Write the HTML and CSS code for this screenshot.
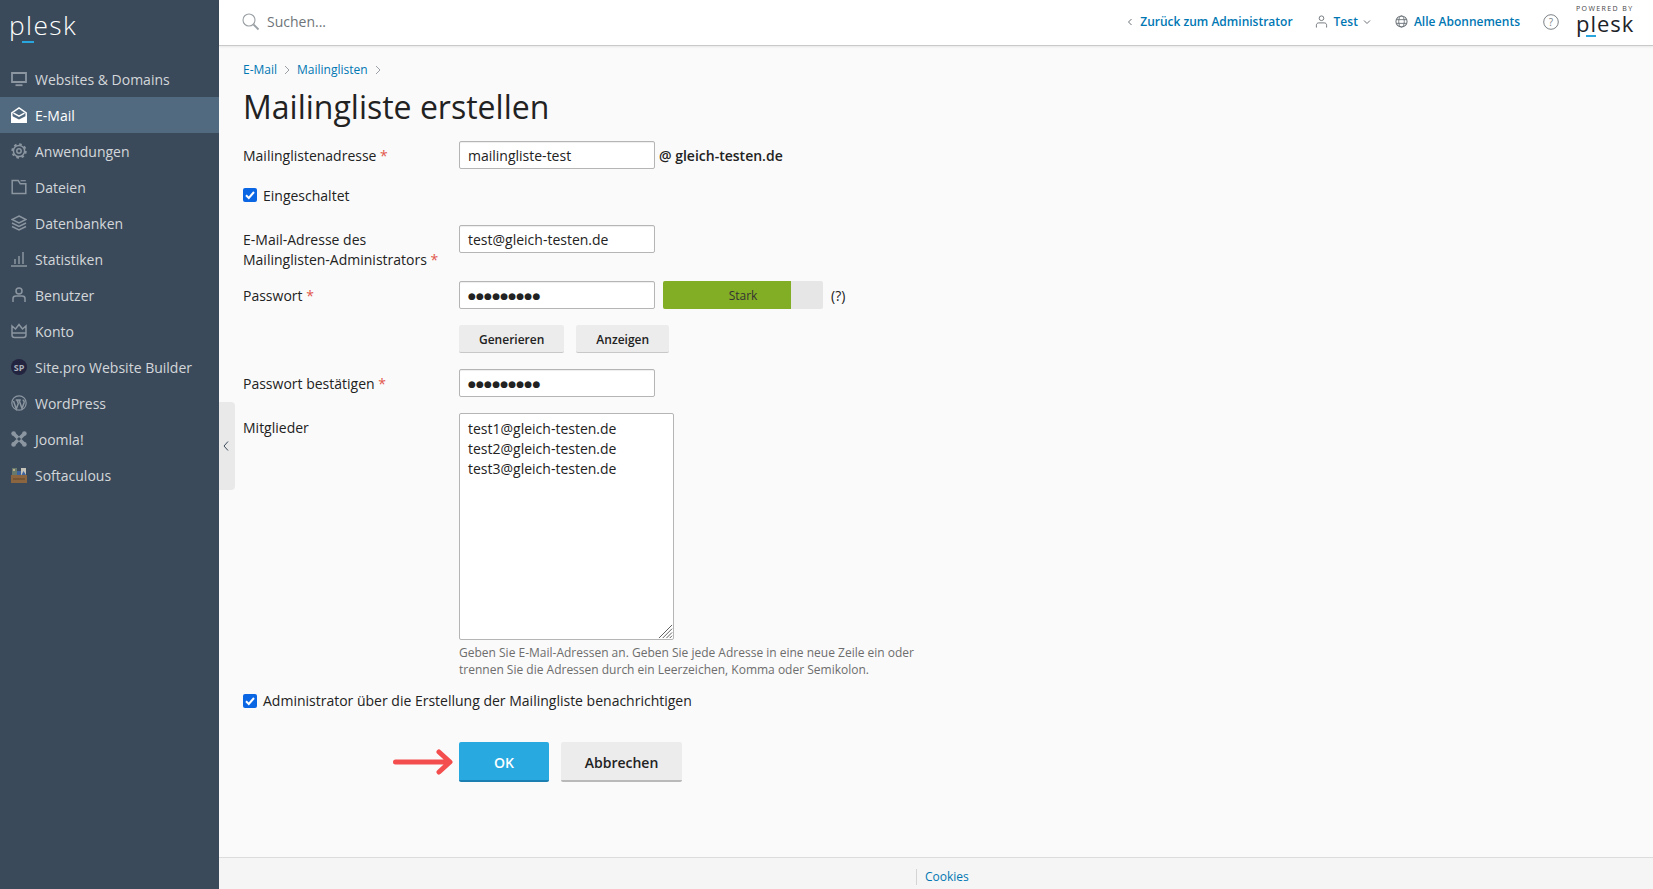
FILE: index.html
```html
<!DOCTYPE html>
<html lang="de">
<head>
<meta charset="utf-8">
<title>Mailingliste erstellen</title>
<link rel="stylesheet" href="styles.css">
</head>
<body>
<div class="app">
  <aside class="sidebar">
    <div class="logo"><span class="logo-word">plesk</span><span class="logo-bar"></span></div>
    <nav class="nav">
      <a class="nav-item"><svg class="nav-icon" viewBox="0 0 16 16"><path d="M1 2h14v9H1z" fill="none" stroke="currentColor" stroke-width="1.8"/><path d="M4.500 14.200h7" stroke="currentColor" stroke-width="1.800"/></svg>Websites &amp; Domains</a>
      <a class="nav-item active"><svg class="nav-icon" viewBox="0 0 16 16"><path d="M.8 15.500V5.800L8 1l7.200 4.800v9.700Z" fill="none" stroke="currentColor" stroke-width="1.500"/><path d="M.5 8.800 8 12.500l7.500-3.700V16H.5Z" fill="currentColor"/><path d="M2.500 6.200 8 9.200l5.500-3" fill="none" stroke="currentColor" stroke-width="1.400"/></svg>E-Mail</a>
      <a class="nav-item"><svg class="nav-icon" viewBox="0 0 16 16"><circle cx="8" cy="8" r="2.200" fill="none" stroke="currentColor" stroke-width="1.500"/><circle cx="8" cy="8" r="5.600" fill="none" stroke="currentColor" stroke-width="1.500"/><circle cx="8" cy="8" r="6.800" fill="none" stroke="currentColor" stroke-width="1.800" stroke-dasharray="2.600 2.740"/></svg>Anwendungen</a>
      <a class="nav-item"><svg class="nav-icon" viewBox="0 0 16 16"><path d="M1.200 1.500v13h13.600V4.800H9.300L7.200 1.500Z" fill="none" stroke="currentColor" stroke-width="1.500"/><path d="M9.500 1.700h5.300" stroke="currentColor" stroke-width="1.200"/></svg>Dateien</a>
      <a class="nav-item"><svg class="nav-icon" viewBox="0 0 16 16"><path d="M8 1 15 4.500 8 8 1 4.500Z" fill="none" stroke="currentColor" stroke-width="1.400"/><path d="M1 8l7 3.500L15 8M1 11.500 8 15l7-3.500" fill="none" stroke="currentColor" stroke-width="1.400"/></svg>Datenbanken</a>
      <a class="nav-item"><svg class="nav-icon" viewBox="0 0 16 16"><path d="M0 15h16M4 13V8M8 13V5M12 13V1" fill="none" stroke="currentColor" stroke-width="1.500"/></svg>Statistiken</a>
      <a class="nav-item"><svg class="nav-icon" viewBox="0 0 16 16"><circle cx="8" cy="4" r="3" fill="none" stroke="currentColor" stroke-width="1.500"/><path d="M2 15v-3.500C2 10 3.500 9 5 9h6c1.500 0 3 1 3 2.500V15" fill="none" stroke="currentColor" stroke-width="1.500"/></svg>Benutzer</a>
      <a class="nav-item"><svg class="nav-icon" viewBox="0 0 16 16"><path d="M1 3l3.500 3L8 1.500 11.500 6 15 3v9c0 1.500-1 2.500-2.500 2.500h-9C2 14.500 1 13.500 1 12Z" fill="none" stroke="currentColor" stroke-width="1.500"/><path d="M1 10h14" stroke="currentColor" stroke-width="1.500"/></svg>Konto</a>
      <a class="nav-item"><span class="nav-icon sp-badge">SP</span>Site.pro Website Builder</a>
      <a class="nav-item"><svg class="nav-icon" viewBox="0 0 16 16"><circle cx="8" cy="8" r="7.200" fill="none" stroke="currentColor" stroke-width="1.200"/><path d="M2.500 6 5.300 14 7.300 8.500 6 5H4.700M6 5h3.800M8 5 11 13.500 13 8c.4-1.400-.3-2.700-1.300-3" fill="none" stroke="currentColor" stroke-width="1.500"/></svg>WordPress</a>
      <a class="nav-item"><svg class="nav-icon" viewBox="0 0 16 16"><path d="M3 3l10 10M13 3 3 13" stroke="currentColor" stroke-width="3.600"/><circle cx="2.600" cy="2.600" r="2.300" fill="currentColor"/><circle cx="13.400" cy="2.600" r="2.300" fill="currentColor"/><circle cx="2.600" cy="13.400" r="2.300" fill="currentColor"/><circle cx="13.400" cy="13.400" r="2.300" fill="currentColor"/><path d="M8 6 10 8 8 10 6 8Z" fill="#3b4a5a"/></svg>Joomla!</a>
      <a class="nav-item"><svg class="nav-icon soft" viewBox="0 0 16 16"><path d="M0 8h16v8H0z" fill="#94683e"/><path d="M1 1h5v7H1z" fill="#6c7f70"/><path d="M2 2h2v2H2z" fill="#c9b98d"/><path d="M6 4h4v4H6z" fill="#3f66a5"/><path d="M10 1h5v7h-5z" fill="#d6d2c5"/><path d="M10.500 8l2-4 2.500 4z" fill="#3f66a5"/><path d="M2 11h12v2H2z" fill="#7d5732"/></svg>Softaculous</a>
    </nav>
  </aside>
  <div class="sidebar-toggle"><svg class="toggle-icon" viewBox="0 0 8 12"><path d="M6 1.500 2 6l4 4.500" fill="none" stroke="#3b4a5a" stroke-width="1"/></svg></div>
  <div class="column">
    <header class="topbar">
      <div class="search">
        <svg class="search-icon" viewBox="0 0 18 18"><circle cx="7" cy="7" r="6" fill="none" stroke="#9aa0a5" stroke-width="1.100"/><path d="M11.500 11.500l5 5" stroke="#9aa0a5" stroke-width="1.800"/></svg>
        <span class="search-text">Suchen...</span>
      </div>
      <div class="top-links">
        <a class="top-link back"><svg class="mini" viewBox="0 0 6 8"><path d="M4.500 1 1.500 4l3 3" fill="none" stroke="#6b7278" stroke-width="1"/></svg>Zurück zum Administrator</a>
        <a class="top-link user"><svg class="top-icon" viewBox="0 0 14 14"><circle cx="7" cy="3.500" r="2.500" fill="none" stroke="#6b7278"/><path d="M1.500 13.500v-2.500c0-1.500 1-2.500 2.500-2.500h6c1.500 0 2.500 1 2.500 2.500v2.500" fill="none" stroke="#6b7278"/></svg>Test<svg class="mini caret" viewBox="0 0 8 6"><path d="M1 1.500 4 4.500l3-3" fill="none" stroke="#6b7278" stroke-width="1"/></svg></a>
        <a class="top-link subs"><svg class="top-icon" viewBox="0 0 14 14"><circle cx="7" cy="7" r="6" fill="none" stroke="#6b7278" stroke-width="1.100"/><ellipse cx="7" cy="7" rx="3" ry="6" fill="none" stroke="#6b7278"/><path d="M1.500 5h11M1.500 9h11" stroke="#6b7278"/></svg>Alle Abonnements</a>
        <span class="help"><svg class="help-icon" viewBox="0 0 16 16"><circle cx="8" cy="8" r="7.300" fill="none" stroke="#7b8186" stroke-width="1"/><text x="8" y="11.500" text-anchor="middle" class="help-q">?</text></svg></span>
        <div class="powered">
          <span class="powered-by">POWERED BY</span>
          <span class="powered-word">plesk</span><span class="powered-bar"></span>
        </div>
      </div>
    </header>
    <main class="main">
      <div class="crumbs"><a>E-Mail</a><svg class="crumb-sep" viewBox="0 0 6 10"><path d="M1 1l4 4-4 4" fill="none" stroke="#9aa0a5"/></svg><a>Mailinglisten</a><svg class="crumb-sep" viewBox="0 0 6 10"><path d="M1 1l4 4-4 4" fill="none" stroke="#9aa0a5"/></svg></div>
      <h1 class="title">Mailingliste erstellen</h1>
      <form class="form">
        <div class="row r-addr">
          <label class="label">Mailinglistenadresse <b class="req">*</b></label>
          <div class="field inline"><div class="input">mailingliste-test</div><span class="domain">@ gleich-testen.de</span></div>
        </div>
        <label class="check c-on"><span class="box"><svg viewBox="0 0 14 14"><path d="M3 7.300 5.800 10 11 4" fill="none" stroke="#fff" stroke-width="2"/></svg></span><span class="check-low">Eingeschaltet</span></label>
        <div class="row r-admin">
          <label class="label">E-Mail-Adresse des<br>Mailinglisten-Administrators <b class="req">*</b></label>
          <div class="field"><div class="input">test@gleich-testen.de</div></div>
        </div>
        <div class="row r-pass">
          <label class="label">Passwort <b class="req">*</b></label>
          <div class="field inline">
            <div class="input dots">●●●●●●●●●</div>
            <div class="meter"><div class="meter-fill">Stark</div></div>
            <span class="meter-help">(?)</span>
          </div>
        </div>
        <div class="row r-btns">
          <span class="label"></span>
          <div class="field inline gap12"><span class="btn">Generieren</span><span class="btn">Anzeigen</span></div>
        </div>
        <div class="row r-confirm">
          <label class="label">Passwort bestätigen <b class="req">*</b></label>
          <div class="field"><div class="input dots">●●●●●●●●●</div></div>
        </div>
        <div class="row r-members">
          <label class="label">Mitglieder</label>
          <div class="field">
            <div class="textarea">test1@gleich-testen.de<br>test2@gleich-testen.de<br>test3@gleich-testen.de
              <svg class="grip" viewBox="0 0 16 16"><path d="M15 1 1 15M15 5 5 15M15 9 9 15M15 12.500 12.500 15" stroke="#555" stroke-width="1" fill="none"/></svg>
            </div>
            <p class="hint">Geben Sie E-Mail-Adressen an. Geben Sie jede Adresse in eine neue Zeile ein oder<br>trennen Sie die Adressen durch ein Leerzeichen, Komma oder Semikolon.</p>
          </div>
        </div>
        <label class="check c-notify"><span class="box"><svg viewBox="0 0 14 14"><path d="M3 7.300 5.800 10 11 4" fill="none" stroke="#fff" stroke-width="2"/></svg></span>Administrator über die Erstellung der Mailingliste benachrichtigen</label>
        <div class="row r-actions">
          <span class="label arrow-cell"><svg class="arrow" viewBox="0 0 60 26"><path d="M2.500 13H56M46 3l11 10-11 10" fill="none" stroke="#f44d4d" stroke-width="5" stroke-linecap="round" stroke-linejoin="round"/></svg></span>
          <div class="field inline gap12"><span class="action ok">OK</span><span class="action cancel">Abbrechen</span></div>
        </div>
      </form>
    </main>
    <footer class="footer"><a class="cookies">Cookies</a></footer>
  </div>
</div>
</body>
</html>
```

FILE: styles.css
```css
* { box-sizing: border-box; }
html, body { margin: 0; height: 100%; }
body { font-family: "Open Sans", "Liberation Sans", sans-serif; font-size: 14px; color: #222; background: #fafafa; overflow: hidden; }
.app { display: flex; height: 889px; position: relative; }
a { color: #0077b3; text-decoration: none; }

.sidebar { width: 219px; flex: none; background: #3b4a5a; color: #d5d9dd; }
.logo { height: 61px; padding: 10px 0 0 9px; position: relative; }
.logo-word { display: block; font-weight: 300; font-size: 26.3px; line-height: 30px; color: #fff; letter-spacing: 1.4px; }
.logo-bar { position: absolute; left: 22px; top: 41px; width: 12px; height: 2px; background: #2aa6df; }
.nav { display: flex; flex-direction: column; }
.nav-item { height: 36px; display: flex; align-items: center; padding-left: 11px; color: #d3d7db; font-size: 14px; gap: 8px; }
.nav-item.active { background: #526a7f; color: #fff; }
.nav-icon { width: 16px; height: 16px; flex: none; color: #8b96a1; }
.active .nav-icon { color: #fff; }
.sp-badge { border-radius: 50%; background: #23243f; color: #aab0bb; font-size: 9px; font-weight: 700; display: flex; align-items: center; justify-content: center; }
.soft { opacity: .9; }

.sidebar-toggle { position: absolute; left: 219px; top: 402px; width: 16px; height: 88px; padding-right: 2px; background: #e9e9e9; border-radius: 0 4px 4px 0; display: flex; align-items: center; justify-content: center; z-index: 2; }
.toggle-icon { width: 8px; height: 12px; }

.column { flex: 1; min-width: 0; display: flex; flex-direction: column; }
.topbar { height: 46px; flex: none; background: #fff; border-bottom: 1px solid #c9c9c9; box-shadow: 0 1px 2px rgba(0,0,0,.08); display: flex; align-items: center; justify-content: space-between; padding: 0 19px 2px 23px; }
.search { display: flex; align-items: center; gap: 7px; }
.search-icon { width: 18px; height: 18px; }
.search-text { font-size: 14px; color: #6e7478; }
.top-links { display: flex; align-items: center; }
.top-link { display: flex; align-items: center; font-size: 12px; font-weight: 600; color: #0077b3; }
.mini { width: 6px; height: 8px; margin-right: 7px; }
.caret { width: 8px; height: 6px; margin: 0 0 0 5px; }
.top-icon { width: 13px; height: 13px; margin-right: 6px; }
.back { margin-right: 22px; }
.user { margin-right: 24px; }
.subs { margin-right: 23px; }
.help { display: flex; margin-right: 17px; }
.help-icon { width: 16px; height: 16px; }
.help-q { font-size: 10px; fill: #7b8186; font-family: "Open Sans", sans-serif; }
.powered { position: relative; width: 58px; height: 34px; color: #222; }
.powered-by { display: block; font-size: 7px; letter-spacing: 1.4px; line-height: 8px; color: #444; white-space: nowrap; }
.powered-word { display: block; font-weight: 400; font-size: 22px; line-height: 20px; letter-spacing: 1px; color: #1c2329; }
.powered-bar { position: absolute; left: 10px; top: 30px; width: 10px; height: 2px; background: #2aa6df; }

.main { flex: 1; padding: 16px 24px 0; min-height: 0; }
.crumbs { display: flex; align-items: center; font-size: 12px; line-height: 16px; margin-top: 0; }
.crumb-sep { width: 6px; height: 10px; margin: 0 7px; }
.title { font-size: 32px; font-weight: 400; line-height: 44px; margin: 7px 0 0; color: #222; }
.form { display: flex; flex-direction: column; }
.row { display: flex; }
.label { width: 216px; flex: none; line-height: 20px; padding-top: 5px; }
.req { color: #e2574c; font-weight: 400; }
.field { flex: 1; }
.inline { display: flex; align-items: center; }
.gap12 { gap: 12px; }
.input { width: 196px; height: 28px; background: #fff; border: 1px solid #b5b5b5; border-radius: 2px; padding: 0 8px; line-height: 28px; font-size: 14px; box-shadow: inset 0 1px 1px #eee; flex: none; }
.dots { font-size: 9px; letter-spacing: .2px; color: #222; font-family: "DejaVu Sans", sans-serif; }
.domain { font-weight: 600; margin-left: 4px; line-height: 22px; padding-top: 2px; }
.check { display: flex; align-items: center; gap: 6px; line-height: 20px; }
.check-low { padding-top: 2px; }
.box { width: 14px; height: 14px; background: #0b66e4; border-radius: 2px; display: block; flex: none; }
.box svg { display: block; width: 14px; height: 14px; }
.r-addr { margin-top: 12px; }
.c-on { margin-top: 15px; }
.r-admin { margin-top: 19px; }
.r-pass { margin-top: 11px; }
.r-btns { margin-top: 16px; }
.r-confirm { margin-top: 16px; }
.r-members { margin-top: 16px; }
.meter { width: 160px; height: 28px; background: #e6e6e6; border-radius: 2px; margin-left: 8px; overflow: hidden; flex: none; }
.meter-fill { width: 128px; height: 28px; background: #82ae25; font-size: 12px; line-height: 30px; text-align: center; color: #333; padding-left: 32px; }
.meter-help { margin-left: 8px; font-size: 14px; }
.btn { height: 28px; line-height: 30px; padding: 0 20px; background: #ececec; border-bottom: 1px solid #c8c8c8; border-radius: 2px; font-size: 12px; font-weight: 600; color: #222; }
.textarea { width: 215px; height: 227px; background: #fff; border: 1px solid #b5b5b5; border-radius: 2px; padding: 5px 8px; line-height: 20px; position: relative; }
.grip { position: absolute; right: 0; bottom: 0; width: 15px; height: 15px; }
.hint { margin: 4px 0 0; font-size: 12px; line-height: 17px; color: #6d6d6d; }
.c-notify { margin-top: 13px; }
.r-actions { margin-top: 31px; }
.arrow-cell { position: relative; padding: 0; }
.arrow { position: absolute; right: 6px; top: 7px; width: 60px; height: 26px; }
.action { height: 40px; line-height: 42px; font-size: 14px; font-weight: 600; text-align: center; border-radius: 2px; }
.ok { width: 90px; background: #28aae1; color: #fff; border-bottom: 2px solid #1b7fb2; }
.cancel { width: 121px; background: #ececec; color: #222; border-bottom: 2px solid #b9b9b9; }
.footer { height: 32px; flex: none; background: #f5f5f5; border-top: 1px solid #dcdcdc; padding: 6px 0 0 697px; display: flex; align-items: center; }
.cookies { font-size: 12px; border-left: 1px solid #d4d4d4; padding-left: 8px; line-height: 16px; }
```
